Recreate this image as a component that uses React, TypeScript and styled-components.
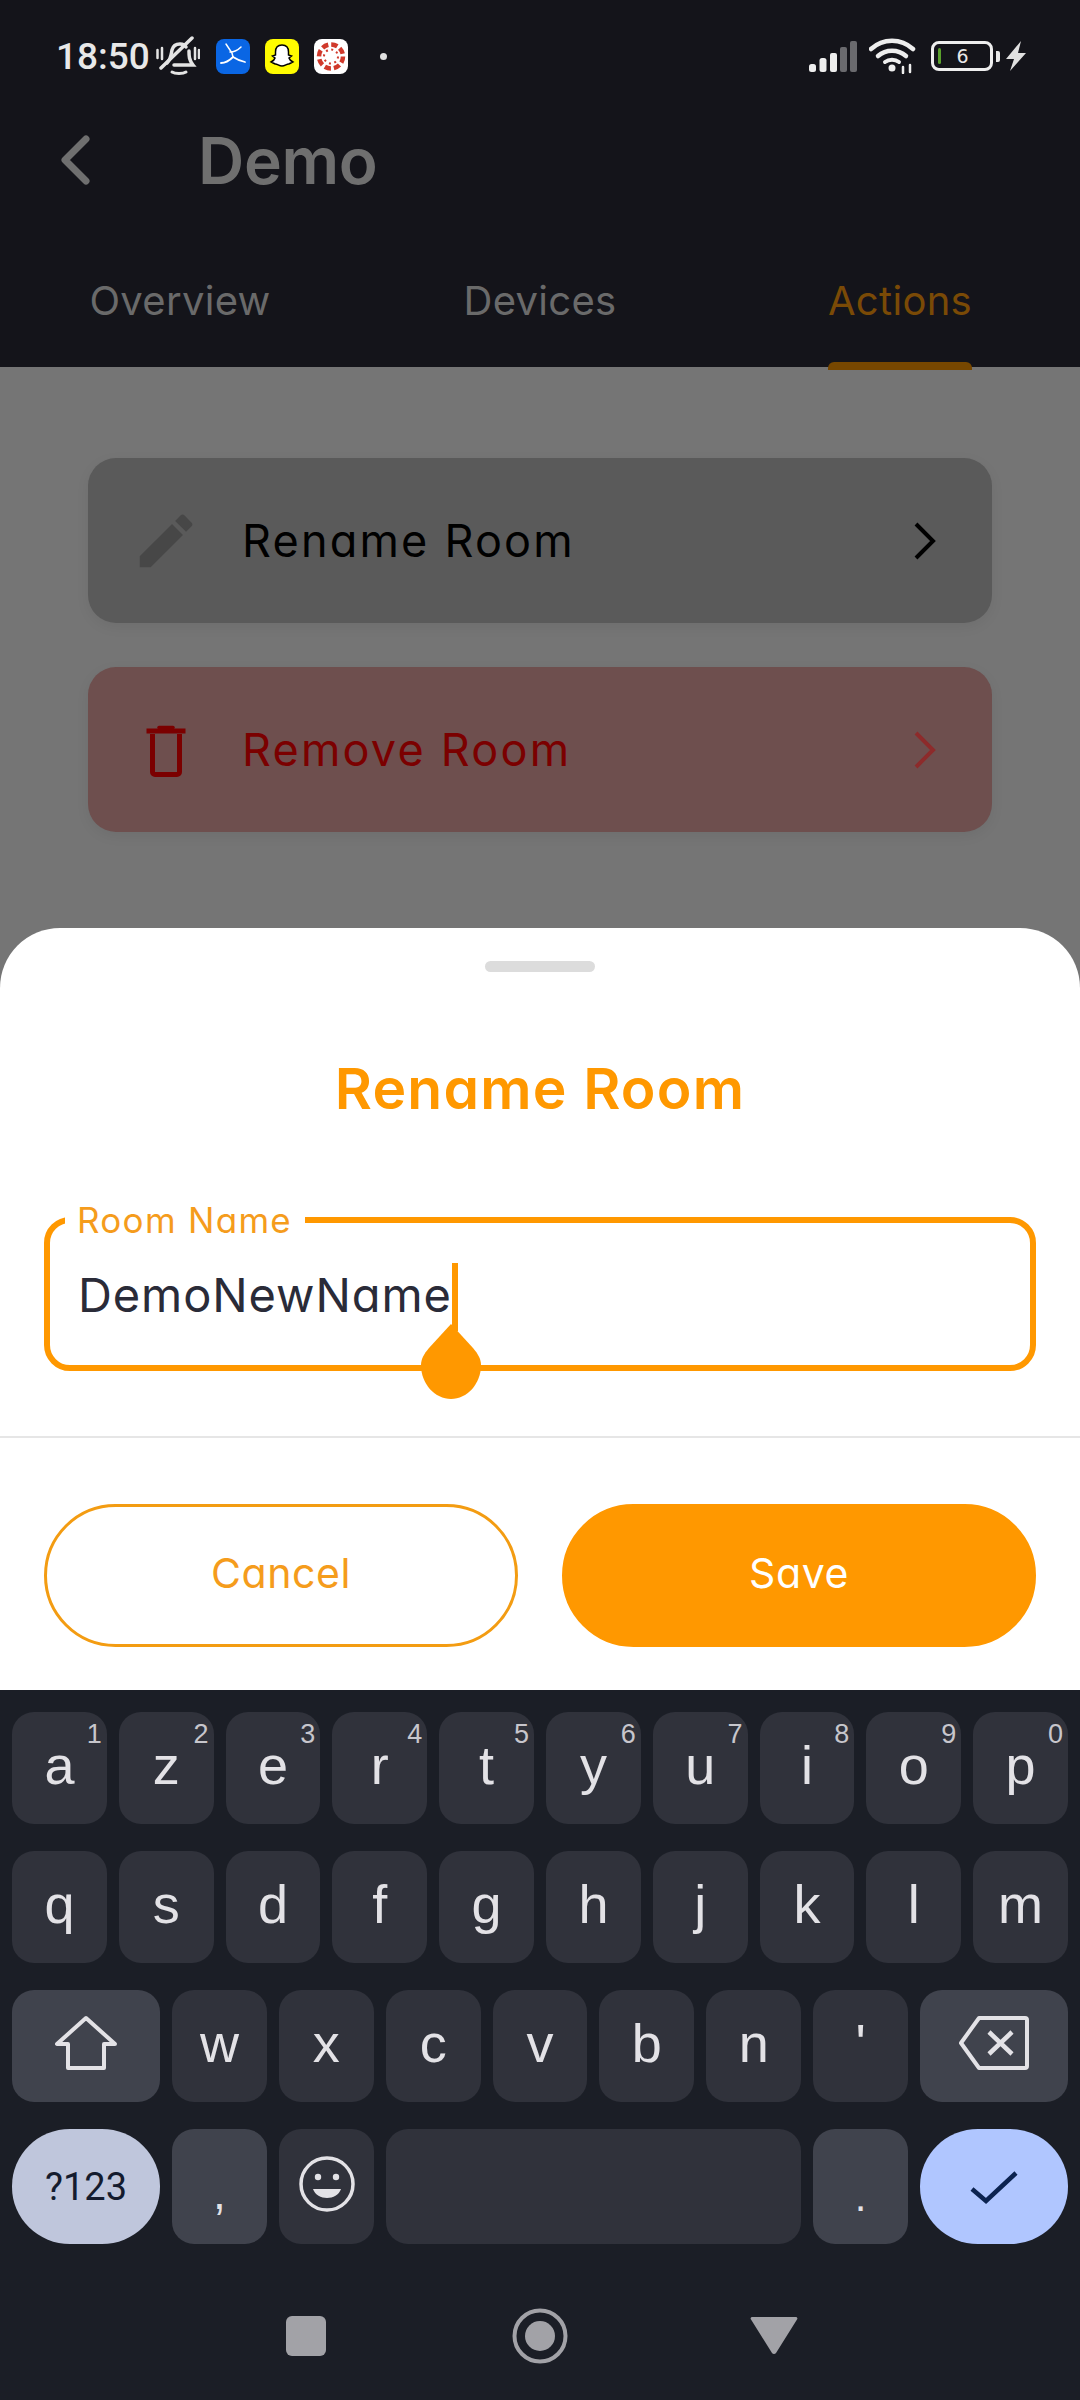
import React from 'react';
import styled, { createGlobalStyle } from 'styled-components';

const GlobalStyle = createGlobalStyle`
  html, body { margin: 0; padding: 0; background: #1b1e26; }
  * { box-sizing: border-box; }
`;

const Page = styled.div`
  width: 1080px;
  height: 2400px;
  display: flex;
  flex-direction: column;
  overflow: hidden;
  background: #757575;
  font-family: Inter, "Liberation Sans", sans-serif;
  font-feature-settings: "cv11";
`;

const Header = styled.header`
  height: 367px;
  flex: none;
  display: flex;
  flex-direction: column;
  background: #14141a;
`;

const StatusBar = styled.div`
  height: 112px;
  display: flex;
  align-items: center;
  justify-content: space-between;
  padding: 0 54px 0 56px;
`;
const StatusGroup = styled.div`
  display: flex;
  align-items: center;
`;
const Clock = styled.span`
  font-family: Roboto, sans-serif;
  font-weight: 500;
  font-size: 37px;
  color: #e8e8e8;
  margin-right: 6px;
`;
const BellIcon = styled.svg`
  width: 44px;
  height: 40px;
  margin-right: 1px;
  display: block;
`;
const AppIcon = styled.svg`
  width: 34px;
  height: 35px;
  margin-left: 15px;
  display: block;
`;
const Dot = styled.span`
  width: 7px;
  height: 7px;
  margin-left: 32px;
  border-radius: 50%;
  background: #e0e0e0;
`;
const SignalIcon = styled.svg`
  width: 48px;
  height: 31px;
  display: block;
`;
const WifiIcon = styled.svg`
  width: 48px;
  height: 36px;
  margin-left: 12px;
  display: block;
`;
const Battery = styled.div`
  position: relative;
  width: 62px;
  height: 30px;
  margin-left: 14px;
  border: 3px solid #eeeeee;
  border-radius: 8px;
  display: flex;
  align-items: center;
  justify-content: center;
  padding-left: 1px;
  font-family: "DejaVu Sans", sans-serif;
  font-size: 19px;
  color: #e8e8e8;
`;
const BatteryLevel = styled.span`
  position: absolute;
  left: 4px;
  top: 4px;
  bottom: 4px;
  width: 3px;
  border-radius: 2px;
  background: #5aa02c;
`;
const BatteryNub = styled.span`
  width: 4px;
  height: 11px;
  margin-left: 3px;
  border-radius: 0 2px 2px 0;
  background: #e8e8e8;
`;
const BoltIcon = styled.svg`
  width: 20px;
  height: 30px;
  margin-left: 6px;
  display: block;
`;

const TitleRow = styled.div`
  height: 114px;
  display: flex;
  align-items: center;
  padding-left: 60px;
  margin-top: -9px;
`;
const BackIcon = styled.svg`
  width: 32px;
  height: 50px;
  display: block;
`;
const PageTitle = styled.h1`
  margin: 0 0 0 106px;
  font-size: 64px;
  font-weight: 600;
  letter-spacing: -0.3px;
  color: #6f6f6f;
`;

const Tabs = styled.nav`
  flex: 1;
  display: grid;
  grid-template-columns: repeat(3, 1fr);
`;
const Tab = styled.div<{ $active?: boolean }>`
  position: relative;
  display: flex;
  justify-content: center;
  padding-top: 61px;
  font-size: 40px;
  line-height: 46px;
  letter-spacing: 0.3px;
  color: ${(p) => (p.$active ? '#7a4a06' : '#6a6a6a')};
`;
const TabMark = styled.span`
  position: absolute;
  bottom: -3px;
  left: 108px;
  width: 144px;
  height: 8px;
  border-radius: 6px 6px 0 0;
  background: #774700;
`;

const Body = styled.main`
  height: 561px;
  flex: none;
  display: flex;
  flex-direction: column;
  gap: 44px;
  padding: 91px 88px 0;
`;
const ActionCard = styled.div<{ $danger?: boolean }>`
  height: 165px;
  display: flex;
  align-items: center;
  padding: 0 55px 0 50px;
  border-radius: 28px;
  background: ${(p) => (p.$danger ? '#6e4f4e' : '#5a5a5a')};
  box-shadow: 0 4px 14px rgba(0, 0, 0, 0.06);
`;
const CardIcon = styled.svg`
  width: 56px;
  height: 56px;
  flex: none;
  display: block;
`;
const CardLabel = styled.span<{ $danger?: boolean }>`
  flex: 1;
  margin-left: 48px;
  font-size: 45px;
  letter-spacing: 2.2px;
  color: ${(p) => (p.$danger ? '#7b0000' : '#000')};
`;
const CardChevron = styled.svg`
  width: 24px;
  height: 38px;
  display: block;
`;

const Sheet = styled.section`
  height: 762px;
  flex: none;
  display: flex;
  flex-direction: column;
  padding-top: 33px;
  border-radius: 60px 60px 0 0;
  background: #fff;
`;
const Grabber = styled.div`
  width: 110px;
  height: 11px;
  margin: 0 auto;
  border-radius: 6px;
  background: #dcdcdc;
`;
const SheetTitle = styled.h2`
  margin: 83px 0 0;
  text-align: center;
  font-size: 57px;
  line-height: 68px;
  font-weight: 600;
  letter-spacing: 1.2px;
  color: #ff9800;
`;
const Field = styled.div`
  position: relative;
  height: 154px;
  margin: 94px 44px 0;
  display: flex;
  align-items: center;
  padding: 0 28px;
  border: 6px solid #ff9800;
  border-radius: 26px;
`;
const FieldLabel = styled.label`
  position: absolute;
  top: -22px;
  left: 15px;
  padding: 0 13px 0 12px;
  background: #fff;
  font-size: 35px;
  line-height: 38px;
  letter-spacing: 1.3px;
  color: #f59c1c;
`;
const FieldValue = styled.span`
  font-size: 47px;
  letter-spacing: 0.9px;
  color: #2a2b38;
`;
const Caret = styled.span`
  position: absolute;
  left: 402px;
  top: 40px;
  width: 6px;
  height: 68px;
  background: #ff9800;
`;
const CaretHandle = styled.svg`
  position: absolute;
  left: 371px;
  top: 101px;
  width: 60px;
  height: 76px;
  display: block;
`;
const Divider = styled.div`
  height: 2px;
  margin-top: 65px;
  background: #e6e6e6;
`;
const ButtonRow = styled.div`
  display: grid;
  grid-template-columns: repeat(2, 1fr);
  gap: 44px;
  margin-top: 66px;
  padding: 0 44px;
`;
const SheetButton = styled.button<{ $primary?: boolean }>`
  height: 143px;
  padding: 0 0 5px;
  border-radius: 72px;
  border: 3px solid ${(p) => (p.$primary ? '#ff9800' : '#f39c12')};
  background: ${(p) => (p.$primary ? '#ff9800' : '#fff')};
  color: ${(p) => (p.$primary ? '#fff' : '#f59c1c')};
  font-family: inherit;
  font-feature-settings: inherit;
  font-size: 41px;
  letter-spacing: 0.6px;
`;

const Keyboard = styled.section`
  flex: 1;
  display: flex;
  flex-direction: column;
  padding-top: 22px;
  background: #1b1e26;
`;
const KeyRow = styled.div<{ $wide?: boolean }>`
  display: grid;
  grid-template-columns: ${(p) =>
    p.$wide ? '148px repeat(7, 1fr) 148px' : 'repeat(10, 1fr)'};
  gap: 12px;
  height: 112px;
  flex: none;
  margin-bottom: 27px;
  padding: 0 12px;
`;
const SpaceRow = styled(KeyRow)`
  grid-template-columns: 148px 95px 95px 1fr 95px 148px;
  height: 115px;
  margin-bottom: 0;
`;
const Key = styled.div<{ $fn?: boolean }>`
  position: relative;
  display: flex;
  align-items: center;
  justify-content: center;
  padding-bottom: 6px;
  border-radius: 22px;
  background: ${(p) => (p.$fn ? '#40434d' : '#30323b')};
  font-family: "Liberation Sans", sans-serif;
  font-size: 54px;
  color: #e3e2e6;
`;
const Hint = styled.span`
  position: absolute;
  top: 7px;
  right: 5px;
  font-size: 27px;
  color: #c7c6cc;
`;
const PillKey = styled.div<{ $accent?: boolean }>`
  display: flex;
  align-items: center;
  justify-content: center;
  border-radius: 58px / 57px;
  background: ${(p) => (p.$accent ? '#b0c6ff' : '#bfc6dc')};
  font-family: Roboto, "Liberation Sans", sans-serif;
  font-size: 38px;
  color: #141b2e;
`;
const KeyGlyph = styled.svg<{ $w: number; $h: number }>`
  width: ${(p) => p.$w}px;
  height: ${(p) => p.$h}px;
  display: block;
`;
const LowMark = styled.span<{ $small?: boolean }>`
  position: relative;
  top: ${(p) => (p.$small ? 13 : 9)}px;
  font-size: ${(p) => (p.$small ? 42 : 46)}px;
`;

const NavBar = styled.nav`
  flex: 1;
  display: grid;
  grid-template-columns: repeat(3, 1fr);
  align-items: center;
  justify-items: center;
  padding: 28px 189px 0;
`;
const NavGlyph = styled.svg`
  width: 60px;
  height: 60px;
  display: block;
`;

const rowOne = [
  ['a', '1'], ['z', '2'], ['e', '3'], ['r', '4'], ['t', '5'],
  ['y', '6'], ['u', '7'], ['i', '8'], ['o', '9'], ['p', '0'],
];
const rowTwo = ['q', 's', 'd', 'f', 'g', 'h', 'j', 'k', 'l', 'm'];
const rowThree = ['w', 'x', 'c', 'v', 'b', 'n', "'"];

const App: React.FC = () => (
  <Page>
    <GlobalStyle />
    <Header>
      <StatusBar>
        <StatusGroup>
          <Clock>18:50</Clock>
          <BellIcon viewBox="0 0 44 40" fill="none" stroke="#e4e4e4" strokeWidth="3.500" strokeLinecap="round">
            <path d="M11 27c4-4 4-8 5-13 1-4 4-6 8-6 3 0 5 1 6 3M33 15c0 5 0 9 4 14H18" />
            <path d="M5 32L36 2" />
            <path d="M16 36c3 2 11 2 14 0" strokeWidth="3" />
            <path d="M1.500 14v8M6 12v11M39 12v11M43 14v8" strokeWidth="2.500" />
          </BellIcon>
          <AppIcon viewBox="0 0 34 35">
            <rect width="34" height="35" rx="8" fill="#0a66e4" />
            <g fill="none" stroke="#fff" strokeWidth="1.800" strokeLinecap="round">
              <path d="M5 24c4 0 8-2 12-6" />
              <path d="M17 18c3 2 8 4 12 5" />
              <path d="M10 5l6 9 1 4" strokeWidth="1.500" />
              <path d="M14 13c3 0 8-2 11-5" strokeWidth="1.500" />
            </g>
          </AppIcon>
          <AppIcon viewBox="0 0 34 35">
            <rect width="34" height="35" rx="8" fill="#fffc00" />
            <path d="M17 6c4.500 0 6.500 3 6.500 7v3l3 1-2.500 2c.5 2 2 3 4 4-1.500 1-3 1-4 2-2-.5-4 2-7 2s-5-2.500-7-2c-1-1-2.500-1-4-2 2-1 3.500-2 4-4l-2.500-2 3-1v-3c0-4 2-7 6.500-7z" fill="#fff" stroke="#000" strokeWidth="1.500" />
          </AppIcon>
          <AppIcon viewBox="0 0 34 35">
            <rect width="34" height="35" rx="8" fill="#fff" />
            <g fill="none" stroke="#d0392b" strokeWidth="4.500">
              <circle cx="17" cy="17.500" r="12" strokeDasharray="6.400 3" />
            </g>
            <circle cx="17" cy="17.500" r="7" fill="none" stroke="#d0392b" strokeWidth="2" strokeDasharray="2 3.500" />
          </AppIcon>
          <Dot />
        </StatusGroup>
        <StatusGroup>
          <SignalIcon viewBox="0 0 48 31">
            <rect x="0" y="23" width="7" height="8" rx="2.500" fill="#eee" />
            <rect x="10.500" y="17" width="7" height="14" rx="2.500" fill="#eee" />
            <rect x="21" y="12" width="7" height="19" rx="2" fill="#eee" />
            <rect x="31" y="6" width="7" height="25" rx="2" fill="#6a6a6e" />
            <rect x="41" y="0" width="7" height="31" rx="2" fill="#6a6a6e" />
          </SignalIcon>
          <WifiIcon viewBox="0 0 48 36" fill="none" stroke="#eee" strokeWidth="4.500" strokeLinecap="round">
            <path d="M2 11C14 0 32 0 44 11" />
            <path d="M9 18c8-7 20-7 28 0" />
            <path d="M16 24c4-3 10-3 14 0" strokeWidth="4" />
            <circle cx="23" cy="30" r="2.500" fill="#eee" strokeWidth="2" />
            <path d="M34 29v6M41 27v7" strokeWidth="2.500" />
          </WifiIcon>
          <Battery>
            <BatteryLevel />6
          </Battery>
          <BatteryNub />
          <BoltIcon viewBox="0 0 20 30">
            <path d="M15 0L0 18h8L4 30 20 12h-8z" fill="#e0e0e0" />
          </BoltIcon>
        </StatusGroup>
      </StatusBar>
      <TitleRow>
        <BackIcon viewBox="0 0 32 50" fill="none" stroke="#6f6f6f" strokeWidth="7" strokeLinecap="round" strokeLinejoin="round">
          <path d="M26 4L5 25l21 21" />
        </BackIcon>
        <PageTitle>Demo</PageTitle>
      </TitleRow>
      <Tabs>
        <Tab>Overview</Tab>
        <Tab>Devices</Tab>
        <Tab $active>
          Actions
          <TabMark />
        </Tab>
      </Tabs>
    </Header>

    <Body>
      <ActionCard>
        <CardIcon viewBox="2.400 2.400 19.200 19.200" fill="#474747">
          <path d="M3 17.250V21h3.750L17.810 9.940l-3.750-3.750L3 17.250zM20.710 7.040a1 1 0 0 0 0-1.410l-2.340-2.340a1 1 0 0 0-1.410 0l-1.830 1.830 3.750 3.750 1.830-1.830z" />
        </CardIcon>
        <CardLabel>Rename Room</CardLabel>
        <CardChevron viewBox="0 0 24 38" fill="none" stroke="#000" strokeWidth="4">
          <path d="M3 2l17 17L3 36" />
        </CardChevron>
      </ActionCard>
      <ActionCard $danger>
        <CardIcon viewBox="0 0 56 56" fill="none" stroke="#7b0000">
          <path d="M8.500 9h39" strokeWidth="5" />
          <path d="M21 5.500h14" strokeWidth="3.500" strokeLinecap="round" />
          <path d="M14.500 12v38a2.500 2.500 0 0 0 2.500 2.500h22a2.500 2.500 0 0 0 2.500-2.500V12" strokeWidth="5" />
        </CardIcon>
        <CardLabel $danger>Remove Room</CardLabel>
        <CardChevron viewBox="0 0 24 38" fill="none" stroke="#8d2b2b" strokeWidth="4">
          <path d="M3 2l17 17L3 36" />
        </CardChevron>
      </ActionCard>
    </Body>

    <Sheet>
      <Grabber />
      <SheetTitle>Rename Room</SheetTitle>
      <Field>
        <FieldLabel>Room Name</FieldLabel>
        <FieldValue>DemoNewName</FieldValue>
        <Caret />
        <CaretHandle viewBox="0 0 60 76" fill="#ff9800">
          <path d="M30 0l22 24c5 6 8 11 8 17 0 19-14 34-30 34S0 60 0 41c0-6 3-11 8-17z" />
        </CaretHandle>
      </Field>
      <Divider />
      <ButtonRow>
        <SheetButton>Cancel</SheetButton>
        <SheetButton $primary>Save</SheetButton>
      </ButtonRow>
    </Sheet>

    <Keyboard>
      <KeyRow>
        {rowOne.map(([letter, hint]) => (
          <Key key={letter}>
            {letter}
            <Hint>{hint}</Hint>
          </Key>
        ))}
      </KeyRow>
      <KeyRow>
        {rowTwo.map((letter) => (
          <Key key={letter}>{letter}</Key>
        ))}
      </KeyRow>
      <KeyRow $wide>
        <Key $fn>
          <KeyGlyph $w={62} $h={56} viewBox="0 0 62 56" fill="none" stroke="#e3e2e6" strokeWidth="4" strokeLinejoin="round">
            <path d="M31 3L2 29h11v24h36V29h11z" />
          </KeyGlyph>
        </Key>
        {rowThree.map((letter) => (
          <Key key={letter}>{letter}</Key>
        ))}
        <Key $fn>
          <KeyGlyph $w={70} $h={56} viewBox="0 0 70 56" fill="none" stroke="#e3e2e6" strokeWidth="4" strokeLinejoin="round">
            <path d="M20 3h46a2 2 0 0 1 2 2v46a2 2 0 0 1-2 2H20L2 28z" />
            <path d="M30 17l23 22M53 17L30 39" strokeWidth="4.500" />
          </KeyGlyph>
        </Key>
      </KeyRow>
      <SpaceRow>
        <PillKey>?123</PillKey>
        <Key $fn>
          <LowMark>,</LowMark>
        </Key>
        <Key>
          <KeyGlyph $w={56} $h={56} viewBox="0 0 56 56" fill="none" stroke="#e3e2e6" strokeWidth="3.500">
            <circle cx="28" cy="28" r="26" />
            <circle cx="19" cy="21" r="3.200" fill="#e3e2e6" stroke="none" />
            <circle cx="37" cy="21" r="3.200" fill="#e3e2e6" stroke="none" />
            <path d="M14 33h28c-2 6-8 9-14 9s-12-3-14-9z" fill="#e3e2e6" stroke="none" />
          </KeyGlyph>
        </Key>
        <Key />
        <Key $fn>
          <LowMark $small>.</LowMark>
        </Key>
        <PillKey $accent>
          <KeyGlyph $w={50} $h={40} viewBox="0 0 50 40" fill="none" stroke="#0c2350" strokeWidth="4.500">
            <path d="M3 22l14 12L47 6" />
          </KeyGlyph>
        </PillKey>
      </SpaceRow>
      <NavBar>
        <NavGlyph viewBox="0 0 60 60">
          <rect x="10" y="10" width="40" height="40" rx="6" fill="#a2a2a7" />
        </NavGlyph>
        <NavGlyph viewBox="0 0 60 60" fill="none">
          <circle cx="30" cy="30" r="25.500" stroke="#a2a2a7" strokeWidth="4" />
          <circle cx="30" cy="30" r="15" fill="#a2a2a7" />
        </NavGlyph>
        <NavGlyph viewBox="0 0 60 60">
          <path d="M8 11h44a1.500 1.500 0 0 1 1 2.500L32 47a2.500 2.500 0 0 1-4 0L7 13.500A1.500 1.500 0 0 1 8 11z" fill="#a2a2a7" />
        </NavGlyph>
      </NavBar>
    </Keyboard>
  </Page>
);

export default App;
